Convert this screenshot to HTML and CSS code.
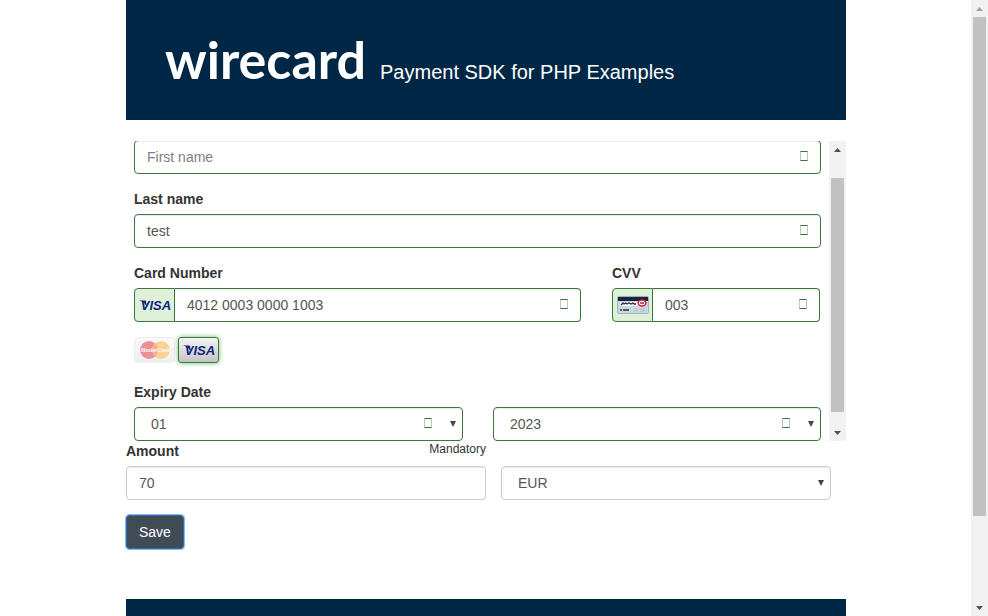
FILE: index.html
```html
<!DOCTYPE html>
<html lang="en">
<head>
<meta charset="utf-8">
<title>Payment SDK for PHP Examples</title>
<link rel="stylesheet" href="styles.css">
</head>
<body>
<div class="viewport">
  <div class="page">
    <header class="banner">
      <span class="logo">wirecard</span>
      <h1 class="title">Payment SDK for PHP Examples</h1>
    </header>
    <main>
      <form>
        <div class="frame">
          <div class="card-form">
            <div class="control valid">
              <input class="field" type="text" placeholder="First name" aria-label="First name">
              <span class="mark"></span>
            </div>
            <div class="group">
              <label for="last">Last name</label>
              <div class="control valid">
                <input class="field" id="last" type="text" value="test">
                <span class="mark"></span>
              </div>
            </div>
            <div class="card-row">
              <div class="group">
                <label for="number">Card Number</label>
                <div class="control valid">
                  <span class="addon">
                    <svg width="34" height="20" viewBox="0 0 34 20"><text class="visa" x="18" y="15" text-anchor="middle">VISA</text><path d="M1 5.500h5.500c1 0 1.500.5 1.600 1.300l1 6C8 9 5 6.500 1 5.500z" fill="#10227c"/></svg>
                  </span>
                  <input class="field joined" id="number" type="text" value="4012 0003 0000 1003">
                  <span class="mark"></span>
                </div>
              </div>
              <div class="group">
                <label for="cvv">CVV</label>
                <div class="control valid">
                  <span class="addon">
                    <svg width="32" height="18" viewBox="0 0 32 18">
                      <rect x=".5" y=".5" width="31" height="17" rx="1" fill="#cbd8e3" stroke="#a3b0bd"/>
                      <path d="M1 1h30v4H1z" fill="#172343"/>
                      <path d="M3 6h22v4H3z" fill="#f5f7fa"/>
                      <path d="M4 9l2-2 1 1 2-1 1 1 2-1 2 1 2-1 1 1 2 0M3 14h2M6 14h6" fill="none" stroke="#28303c" stroke-width="1.3"/>
                      <path d="M17 13h4M23 13h5M17 15h4M23 15h5" stroke="#b4c1cd"/>
                      <ellipse cx="25" cy="7" rx="3.8" ry="3" fill="#fff" stroke="#e31b23" stroke-width="1.5"/>
                      <path d="M23 7h4" stroke="#333" stroke-width="1.3"/>
                    </svg>
                  </span>
                  <input class="field joined" id="cvv" type="text" value="003">
                  <span class="mark"></span>
                </div>
              </div>
            </div>
            <div class="brands">
              <svg class="brand faded" width="41" height="26" viewBox="0 0 41 26">
                <defs><linearGradient id="plate" x2="0" y2="1"><stop stop-color="#f4f4f4"/><stop offset="1" stop-color="#dcdcdc"/></linearGradient></defs>
                <rect x=".5" y=".5" width="40" height="25" rx="3" fill="url(#plate)" stroke="#dadada"/>
                <circle cx="15" cy="13" r="9" fill="#d80b19"/>
                <circle cx="27" cy="13" r="9" fill="#f99d14"/>
                <path d="M21 6.300a9 9 0 0 1 0 13.400a9 9 0 0 1 0-13.400z" fill="#e8541a"/>
                <text class="master" x="21" y="15" text-anchor="middle">MasterCard</text>
              </svg>
              <span class="brand chosen">
                <svg width="34" height="20" viewBox="0 0 34 20"><text class="visa" x="18" y="15" text-anchor="middle">VISA</text><path d="M1 5.500h5.500c1 0 1.500.5 1.600 1.300l1 6C8 9 5 6.500 1 5.500z" fill="#10227c"/></svg>
              </span>
            </div>
            <div class="group">
              <label for="month">Expiry Date</label>
              <div class="expiry-row">
                <div class="control valid dropdown">
                  <select class="field" id="month"><option>01</option></select>
                  <span class="mark"></span>
                </div>
                <div class="control valid dropdown">
                  <select class="field" aria-label="Expiry year"><option>2023</option></select>
                  <span class="mark"></span>
                </div>
              </div>
            </div>
          </div>
          <div class="scrollbar inner"><i class="up"></i><i class="thumb"></i><i class="down"></i></div>
        </div>
        <div class="amount-row">
          <div class="group">
            <div class="label-line"><label for="amount">Amount</label><span class="hint">Mandatory</span></div>
            <div class="control"><input class="field" id="amount" type="text" value="70"></div>
          </div>
          <div class="control dropdown">
            <select class="field" aria-label="Currency"><option>EUR</option></select>
          </div>
        </div>
        <button class="save" type="submit">Save</button>
      </form>
    </main>
    <footer class="footer"></footer>
  </div>
</div>
<div class="scrollbar outer"><i class="up"></i><i class="thumb"></i><i class="down"></i></div>
</body>
</html>
```
FILE: styles.css
```css
* { box-sizing: border-box; }
body {
  margin: 0;
  display: flex;
  height: 100vh;
  overflow: hidden;
  background: #fff;
  color: #333;
  font: 14px/20px "Liberation Sans", Arial, sans-serif;
}
.viewport { flex: 1; display: flex; justify-content: center; padding-left: 1px; }
.page { width: 100%; max-width: 720px; display: flex; flex-direction: column; }
.banner {
  display: flex;
  align-items: baseline;
  gap: 14px;
  height: 120px;
  padding: 29px 39px 0;
  background: #002846;
  color: #fff;
}
.logo { font: 700 52px/60px Lato, sans-serif; }
.title { margin: 0; font-size: 20px; font-weight: 400; }
main { padding: 21px 0 50px; }
.footer { flex: 1; background: #002846; }

.frame { display: flex; height: 300px; overflow: hidden; }
.card-form {
  flex: 1;
  display: flex;
  flex-direction: column;
  gap: 15px;
  margin-top: -1px;
  padding: 0 8px;
}
.group { display: flex; flex-direction: column; gap: 5px; }
label { font-weight: 700; }
.control { position: relative; display: flex; min-width: 0; }
.field {
  flex: 1;
  min-width: 0;
  width: 100%;
  height: 34px;
  margin: 0;
  padding: 6px 12px;
  border: 1px solid #ccc;
  border-radius: 4px;
  background: #fff;
  box-shadow: inset 0 1px 1px rgba(0, 0, 0, .08);
  color: #555;
  font: inherit;
  appearance: none;
}
select.field { padding-left: 16px; }
.field::placeholder { color: #808080; opacity: 1; }
.valid .field { border-color: #3c763d; }
.field.joined { border-left: 0; border-radius: 0 4px 4px 0; }
.addon {
  display: flex;
  align-items: center;
  justify-content: center;
  width: 41px;
  border: 1px solid #3c763d;
  border-radius: 4px 0 0 4px;
  background: #dff0d8;
}
.mark {
  position: absolute;
  top: 11px;
  right: 13px;
  width: 8px;
  height: 10px;
  border: 1px solid #3c763d;
  border-left-color: #b5ccb5;
  border-right-color: #b5ccb5;
}
.dropdown .mark { right: 31px; }
.dropdown::after {
  content: "";
  position: absolute;
  top: 14px;
  right: 7px;
  width: 6px;
  height: 6px;
  background: #444;
  clip-path: polygon(0 0, 100% 0, 50% 100%);
}
.card-row { display: grid; grid-template-columns: 447fr 208fr; gap: 31px; padding-right: 1px; }
.expiry-row { display: grid; grid-template-columns: 329fr 328fr; gap: 30px; }
.brands { display: flex; gap: 3px; height: 30px; }
.brand { width: 41px; height: 26px; }
.faded { opacity: .45; }
.chosen {
  display: flex;
  align-items: center;
  justify-content: center;
  border: 1px solid #3c763d;
  border-radius: 3px;
  background: linear-gradient(#f4f4f4, #c4c4c4);
  box-shadow: 0 0 5px #5fbf60;
}
.visa { font: italic 700 13px "Liberation Sans", sans-serif; fill: #10227c; }
.master { font: italic 700 6px "Liberation Serif", serif; fill: #fff; }

.amount-row {
  display: grid;
  grid-template-columns: 360fr 330fr;
  gap: 15px;
  align-items: end;
  padding-right: 15px;
}
.label-line { display: flex; justify-content: space-between; }
.hint { font-size: 12px; line-height: 16px; }
.save {
  display: block;
  height: 34px;
  margin-top: 15px;
  padding: 6px 12px;
  border: 1px solid #2e6da4;
  border-radius: 3px;
  outline: 1px solid #8ab8f5;
  background: #414b56;
  color: #fff;
  font: inherit;
}

.scrollbar {
  display: flex;
  flex-direction: column;
  align-items: center;
  width: 17px;
  background: #f1f1f1;
}
.up, .down { width: 7px; height: 4px; margin: 7px 0 6px; background: #505050; }
.up { clip-path: polygon(50% 0, 100% 100%, 0 100%); }
.down { clip-path: polygon(0 0, 100% 0, 50% 100%); }
.outer .up { background: #a3a3a3; }
.thumb { width: 13px; background: #c1c1c1; }
.inner .thumb { height: 78%; margin: 20px 0 auto; }
.outer .thumb { height: 81%; margin-bottom: auto; }
```
